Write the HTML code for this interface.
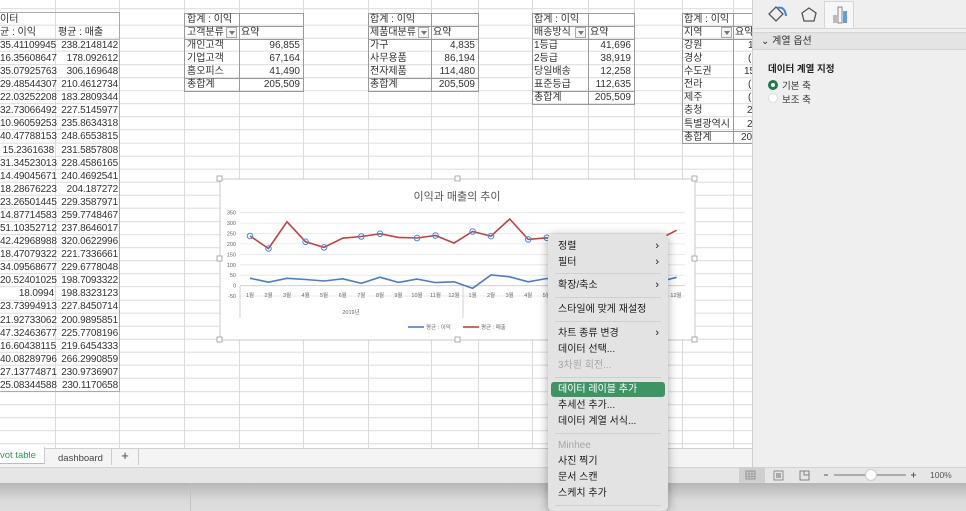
<!DOCTYPE html>
<html><head><meta charset="utf-8"><style>
*{margin:0;padding:0;box-sizing:border-box}
body{width:966px;height:511px;overflow:hidden;background:#fff;font-family:"Liberation Sans","Noto Sans CJK KR",sans-serif;font-size:10px;color:#333;position:relative}
.sheet{position:absolute;left:0;top:0;width:752px;height:448px;background:#fff;
background-image:repeating-linear-gradient(to bottom,transparent 0,transparent 12.08px,#dcdcdc 12.08px,#dcdcdc 13.08px);background-position:0 12.7px;background-repeat:repeat}
.v{position:absolute;top:0;width:1px;height:448px;background:#dcdcdc}
.c{position:absolute;height:13px;line-height:13px;white-space:nowrap}
.r{text-align:right}
.box{position:absolute;border:1px solid #9a9a9a}
.hl{position:absolute;height:1px;background:#9a9a9a}
.vl{position:absolute;width:1px;background:#9a9a9a}
.dd{position:absolute;width:11px;height:11px;border:1px solid #aaa;background:#f4f4f4}
.dd:after{content:"";position:absolute;left:2px;top:3px;border-left:3px solid transparent;border-right:3px solid transparent;border-top:4px solid #777}
.menu{position:absolute;left:548px;top:234px;width:120px;height:277px;background:#e3e3e3;border-radius:5px;box-shadow:0 2px 10px rgba(0,0,0,.35);font-size:10px;color:#1a1a1a}
.mi{position:absolute;left:10px;height:15px;line-height:15px}
.sep{position:absolute;left:7px;width:106px;height:1px;background:#cfcfcf}
.ar{position:absolute;right:9px;font-size:11px}
.num{font-size:10px;letter-spacing:-0.15px}
</style></head><body>
<div class="sheet">
<div class="v" style="left:55px"></div><div class="v" style="left:119px"></div><div class="v" style="left:184px"></div><div class="v" style="left:239px"></div><div class="v" style="left:303px"></div><div class="v" style="left:368px"></div><div class="v" style="left:431px"></div><div class="v" style="left:478px"></div><div class="v" style="left:532px"></div><div class="v" style="left:588px"></div><div class="v" style="left:634px"></div><div class="v" style="left:682px"></div><div class="v" style="left:733px"></div>
</div>
<!-- left table -->
<div class="box" style="left:-2px;top:12px;width:122px;height:380px;border-color:#aaa"></div>
<div class="c" style="left:0;top:12.7px">이터</div>
<div class="c" style="left:0;top:25.8px">균 : 이익</div><div class="c" style="left:58px;top:25.8px">평균 : 매출</div>
<div class="hl" style="left:0;top:38.5px;width:120px;background:#bbb"></div>
<div class="num" style="position:absolute;left:0;top:38.9px;width:118px;line-height:13.08px">
<div style="display:flex"><div style="width:54px;text-align:right">35.41109945</div><div style="width:64px;text-align:right">238.2148142</div></div>
<div style="display:flex"><div style="width:54px;text-align:right">16.35608647</div><div style="width:64px;text-align:right">178.092612</div></div>
<div style="display:flex"><div style="width:54px;text-align:right">35.07925763</div><div style="width:64px;text-align:right">306.169648</div></div>
<div style="display:flex"><div style="width:54px;text-align:right">29.48544307</div><div style="width:64px;text-align:right">210.4612734</div></div>
<div style="display:flex"><div style="width:54px;text-align:right">22.03252208</div><div style="width:64px;text-align:right">183.2809344</div></div>
<div style="display:flex"><div style="width:54px;text-align:right">32.73066492</div><div style="width:64px;text-align:right">227.5145977</div></div>
<div style="display:flex"><div style="width:54px;text-align:right">10.96059253</div><div style="width:64px;text-align:right">235.8634318</div></div>
<div style="display:flex"><div style="width:54px;text-align:right">40.47788153</div><div style="width:64px;text-align:right">248.6553815</div></div>
<div style="display:flex"><div style="width:54px;text-align:right">15.2361638</div><div style="width:64px;text-align:right">231.5857808</div></div>
<div style="display:flex"><div style="width:54px;text-align:right">31.34523013</div><div style="width:64px;text-align:right">228.4586165</div></div>
<div style="display:flex"><div style="width:54px;text-align:right">14.49045671</div><div style="width:64px;text-align:right">240.4692541</div></div>
<div style="display:flex"><div style="width:54px;text-align:right">18.28676223</div><div style="width:64px;text-align:right">204.187272</div></div>
<div style="display:flex"><div style="width:54px;text-align:right">23.26501445</div><div style="width:64px;text-align:right">229.3587971</div></div>
<div style="display:flex"><div style="width:54px;text-align:right">14.87714583</div><div style="width:64px;text-align:right">259.7748467</div></div>
<div style="display:flex"><div style="width:54px;text-align:right">51.10352712</div><div style="width:64px;text-align:right">237.8646017</div></div>
<div style="display:flex"><div style="width:54px;text-align:right">42.42968988</div><div style="width:64px;text-align:right">320.0622996</div></div>
<div style="display:flex"><div style="width:54px;text-align:right">18.47079322</div><div style="width:64px;text-align:right">221.7336661</div></div>
<div style="display:flex"><div style="width:54px;text-align:right">34.09568677</div><div style="width:64px;text-align:right">229.6778048</div></div>
<div style="display:flex"><div style="width:54px;text-align:right">20.52401025</div><div style="width:64px;text-align:right">198.7093322</div></div>
<div style="display:flex"><div style="width:54px;text-align:right">18.0994</div><div style="width:64px;text-align:right">198.8323123</div></div>
<div style="display:flex"><div style="width:54px;text-align:right">23.73994913</div><div style="width:64px;text-align:right">227.8450714</div></div>
<div style="display:flex"><div style="width:54px;text-align:right">21.92733062</div><div style="width:64px;text-align:right">200.9895851</div></div>
<div style="display:flex"><div style="width:54px;text-align:right">47.32463677</div><div style="width:64px;text-align:right">225.7708196</div></div>
<div style="display:flex"><div style="width:54px;text-align:right">16.60438115</div><div style="width:64px;text-align:right">219.6454333</div></div>
<div style="display:flex"><div style="width:54px;text-align:right">40.08289796</div><div style="width:64px;text-align:right">266.2990859</div></div>
<div style="display:flex"><div style="width:54px;text-align:right">27.13774871</div><div style="width:64px;text-align:right">230.9736907</div></div>
<div style="display:flex"><div style="width:54px;text-align:right">25.08344588</div><div style="width:64px;text-align:right">230.1170658</div></div>
</div>

<!-- pivot A -->
<div class="box" style="left:184px;top:12.7px;width:120px;height:79.5px"></div>
<div class="vl" style="left:239px;top:12.7px;height:79px"></div>
<div class="hl" style="left:184px;top:25.8px;width:120px"></div><div class="hl" style="left:184px;top:38.9px;width:120px"></div><div class="hl" style="left:184px;top:78.2px;width:120px"></div>
<div class="c" style="left:187px;top:12.7px">합계 : 이익</div>
<div class="c" style="left:187px;top:25.8px">고객분류</div><div class="dd" style="left:226px;top:26.8px"></div><div class="c" style="left:241px;top:25.8px">요약</div>
<div class="c" style="left:187px;top:38.9px">개인고객</div><div class="c r" style="left:240px;width:60px;top:38.9px">96,855</div>
<div class="c" style="left:187px;top:52px">기업고객</div><div class="c r" style="left:240px;width:60px;top:52px">67,164</div>
<div class="c" style="left:187px;top:65.1px">홈오피스</div><div class="c r" style="left:240px;width:60px;top:65.1px">41,490</div>
<div class="c" style="left:187px;top:78.2px">총합계</div><div class="c r" style="left:240px;width:60px;top:78.2px">205,509</div>
<!-- pivot B -->
<div class="box" style="left:368px;top:12.7px;width:111px;height:79.5px"></div>
<div class="vl" style="left:431px;top:12.7px;height:79px"></div>
<div class="hl" style="left:368px;top:25.8px;width:111px"></div><div class="hl" style="left:368px;top:38.9px;width:111px"></div><div class="hl" style="left:368px;top:78.2px;width:111px"></div>
<div class="c" style="left:370px;top:12.7px">합계 : 이익</div>
<div class="c" style="left:370px;top:25.8px">제품대분류</div><div class="dd" style="left:418px;top:26.8px"></div><div class="c" style="left:433px;top:25.8px">요약</div>
<div class="c" style="left:370px;top:38.9px">가구</div><div class="c r" style="left:432px;width:43px;top:38.9px">4,835</div>
<div class="c" style="left:370px;top:52px">사무용품</div><div class="c r" style="left:432px;width:43px;top:52px">86,194</div>
<div class="c" style="left:370px;top:65.1px">전자제품</div><div class="c r" style="left:432px;width:43px;top:65.1px">114,480</div>
<div class="c" style="left:370px;top:78.2px">총합계</div><div class="c r" style="left:432px;width:43px;top:78.2px">205,509</div>
<!-- pivot C -->
<div class="box" style="left:532px;top:12.7px;width:103px;height:92.6px"></div>
<div class="vl" style="left:588px;top:12.7px;height:92px"></div>
<div class="hl" style="left:532px;top:25.8px;width:103px"></div><div class="hl" style="left:532px;top:38.9px;width:103px"></div><div class="hl" style="left:532px;top:91.3px;width:103px"></div>
<div class="c" style="left:534px;top:12.7px">합계 : 이익</div>
<div class="c" style="left:534px;top:25.8px">배송방식</div><div class="dd" style="left:575px;top:26.8px"></div><div class="c" style="left:590px;top:25.8px">요약</div>
<div class="c" style="left:534px;top:38.9px">1등급</div><div class="c r" style="left:589px;width:42px;top:38.9px">41,696</div>
<div class="c" style="left:534px;top:52px">2등급</div><div class="c r" style="left:589px;width:42px;top:52px">38,919</div>
<div class="c" style="left:534px;top:65.1px">당일배송</div><div class="c r" style="left:589px;width:42px;top:65.1px">12,258</div>
<div class="c" style="left:534px;top:78.2px">표준등급</div><div class="c r" style="left:589px;width:42px;top:78.2px">112,635</div>
<div class="c" style="left:534px;top:91.3px">총합계</div><div class="c r" style="left:589px;width:42px;top:91.3px">205,509</div>
<!-- pivot D -->
<div class="box" style="left:682px;top:12.7px;width:80px;height:131px"></div>
<div class="vl" style="left:733px;top:12.7px;height:131px"></div>
<div class="hl" style="left:682px;top:25.8px;width:80px"></div><div class="hl" style="left:682px;top:38.9px;width:80px"></div><div class="hl" style="left:682px;top:130.5px;width:80px"></div>
<div class="c" style="left:684px;top:12.7px">합계 : 이익</div>
<div class="c" style="left:684px;top:25.8px">지역</div><div class="dd" style="left:721px;top:26.8px"></div><div class="c" style="left:735px;top:25.8px">요약</div>
<div class="c" style="left:684px;top:38.9px">강원</div><div class="c" style="left:684px;top:52px">경상</div><div class="c" style="left:684px;top:65.1px">수도권</div><div class="c" style="left:684px;top:78.2px">전라</div><div class="c" style="left:684px;top:91.3px">제주</div><div class="c" style="left:684px;top:104.4px">충청</div><div class="c" style="left:684px;top:117.5px">특별광역시</div><div class="c" style="left:684px;top:130.6px">총합계</div>
<div class="c" style="left:748px;top:38.9px">1</div><div class="c" style="left:748px;top:52px">(</div><div class="c" style="left:744px;top:65.1px">15</div><div class="c" style="left:748px;top:78.2px">(</div><div class="c" style="left:748px;top:91.3px">(</div><div class="c" style="left:747px;top:104.4px">2</div><div class="c" style="left:747px;top:117.5px">2</div><div class="c" style="left:741px;top:130.6px">20</div>

<!-- chart -->
<svg style="position:absolute;left:0;top:0" width="966" height="511">
<rect x="220" y="179" width="475" height="161" fill="#fff" stroke="#c8c8c8"/>
<g fill="#fff" stroke="#999" stroke-width="0.8">
<rect x="217" y="176" width="5" height="5"/><rect x="455" y="176" width="5" height="5"/><rect x="692" y="176" width="5" height="5"/>
<rect x="217" y="256" width="5" height="5"/><rect x="692" y="256" width="5" height="5"/>
<rect x="217" y="337" width="5" height="5"/><rect x="455" y="337" width="5" height="5"/><rect x="692" y="337" width="5" height="5"/>
</g>
<text x="457" y="200" text-anchor="middle" font-size="11" fill="#555" font-family="Liberation Sans,Noto Sans CJK KR,sans-serif">이익과 매출의 추이</text>
<g stroke="#e4e4e4" stroke-width="0.8">
<line x1="240" x2="685" y1="212.7" y2="212.7"/><line x1="240" x2="685" y1="223.1" y2="223.1"/><line x1="240" x2="685" y1="233.5" y2="233.5"/><line x1="240" x2="685" y1="243.9" y2="243.9"/><line x1="240" x2="685" y1="254.4" y2="254.4"/><line x1="240" x2="685" y1="264.8" y2="264.8"/><line x1="240" x2="685" y1="275.2" y2="275.2"/><line x1="240" x2="685" y1="296" y2="296"/>
</g>
<line x1="240" x2="685" y1="285.6" y2="285.6" stroke="#d0d0d0"/>
<line x1="463" x2="463" y1="286" y2="318" stroke="#d0d0d0"/>
<line x1="240" x2="240" y1="286" y2="318" stroke="#d0d0d0"/>
<g font-size="5.5" fill="#666" text-anchor="end" font-family="Liberation Sans,sans-serif">
<text x="236" y="214.7">350</text><text x="236" y="225.1">300</text><text x="236" y="235.5">250</text><text x="236" y="245.9">200</text><text x="236" y="256.4">150</text><text x="236" y="266.8">100</text><text x="236" y="277.2">50</text><text x="236" y="287.6">0</text><text x="236" y="298">-50</text>
</g>
<g font-size="5.5" fill="#666" text-anchor="middle" font-family="Liberation Sans,Noto Sans CJK KR,sans-serif">
<text x="250" y="297">1월</text><text x="268.5" y="297">2월</text><text x="287" y="297">3월</text><text x="305.6" y="297">4월</text><text x="324" y="297">5월</text><text x="342.7" y="297">6월</text><text x="361.3" y="297">7월</text><text x="380" y="297">8월</text><text x="398.4" y="297">9월</text><text x="417" y="297">10월</text><text x="435.5" y="297">11월</text><text x="454" y="297">12월</text>
<text x="472.6" y="297">1월</text><text x="491" y="297">2월</text><text x="509.7" y="297">3월</text><text x="528.2" y="297">4월</text><text x="546.8" y="297">5월</text><text x="676" y="297">12월</text>
<text x="351" y="314">2019년</text>
</g>
<polyline fill="none" stroke="#4a7ec6" stroke-width="1.6" points="250,278.2 268.5,282.2 287,278.3 305.6,279.5 324,281 342.7,278.8 361.3,283.3 380,277.2 398.4,282.4 417,279.1 435.5,282.6 454,281.8 472.6,288.3 491,275 509.7,276.8 528.2,281.8 546.8,278.5 565.3,281.3 583.9,281.8 602.4,280.7 621,281.0 639.5,275.7 658,282.1 676.6,277.3"/>
<polyline fill="none" stroke="#c44044" stroke-width="1.6" points="250,236 268.5,248.5 287,221.8 305.6,241.8 324,247.4 342.7,238.2 361.3,236.5 380,233.8 398.4,237.4 417,238 435.5,235.5 454,243.1 472.6,231.5 491,236.1 509.7,219 528.2,239.4 546.8,237.8 565.3,244.2 583.9,244.2 602.4,238.1 621,243.7 639.5,238.6 658,239.9 676.6,230.2"/>
<g fill="none" stroke="#3d8fe0" stroke-width="1">
<circle cx="250" cy="236" r="2.8"/><circle cx="268.5" cy="248.5" r="2.8"/><circle cx="305.6" cy="241.8" r="2.8"/><circle cx="324" cy="247.4" r="2.8"/><circle cx="361.3" cy="236.5" r="2.8"/><circle cx="380" cy="233.8" r="2.8"/><circle cx="417" cy="238" r="2.8"/><circle cx="435.5" cy="235.5" r="2.8"/><circle cx="472.6" cy="231.5" r="2.8"/><circle cx="491" cy="236.1" r="2.8"/><circle cx="528.2" cy="239.4" r="2.8"/><circle cx="546.8" cy="237.8" r="2.8"/>
</g>
<line x1="408" x2="424" y1="327" y2="327" stroke="#4a7ec6" stroke-width="1.6"/>
<line x1="463" x2="479" y1="327" y2="327" stroke="#c44044" stroke-width="1.6"/>
<g font-size="5.5" fill="#666" font-family="Liberation Sans,Noto Sans CJK KR,sans-serif"><text x="426" y="329">평균 : 이익</text><text x="481" y="329">평균 : 매출</text></g>
</svg>

<!-- right panel -->
<div style="position:absolute;left:752px;top:0;width:214px;height:467px;background:#efefef;border-left:1px solid #d0d0d0">
<div style="position:absolute;left:71px;top:1px;width:30px;height:27px;background:#f7f7f7;border:1px solid #d6d6d6;border-bottom:none"></div>
<div style="position:absolute;left:0;top:28px;width:214px;height:1px;background:#d6d6d6"></div>
<svg style="position:absolute;left:0;top:0" width="110" height="28">
<path d="M16 14 L23 7 L30 14 L23 21 Z" fill="none" stroke="#555" stroke-width="1.3"/><path d="M24 8 Q32 6 33 16" fill="none" stroke="#3b86d8" stroke-width="2"/>
<path d="M56 8 L63 13 L61 21 L51 21 L49 13 Z" fill="none" stroke="#555" stroke-width="1.3"/>
<rect x="80" y="15" width="4" height="8" fill="#bbb"/><rect x="85" y="7" width="4" height="16" fill="none" stroke="#888"/><rect x="90" y="11" width="4" height="12" fill="#5ba0e8"/>
</svg>
<div style="position:absolute;left:0;top:32px;width:214px;height:18px;background:#e4e4e4;border-top:1px solid #d4d4d4;border-bottom:1px solid #d4d4d4;font-size:10px;line-height:17px;padding-left:8px;color:#333">⌄ 계열 옵션</div>
<div style="position:absolute;left:15px;top:61px;font-size:9.5px;font-weight:bold;color:#222">데이터 계열 지정</div>
<div style="position:absolute;left:15px;top:80px;width:10px;height:10px;border-radius:50%;border:3px solid #1e7a4d;background:#fff"></div>
<div style="position:absolute;left:29px;top:78px;font-size:9.5px">기본 축</div>
<div style="position:absolute;left:15px;top:93px;width:10px;height:10px;border-radius:50%;background:#fff;border:1px solid #ddd"></div>
<div style="position:absolute;left:29px;top:92px;font-size:9.5px">보조 축</div>
</div>

<!-- tab bar -->
<div style="position:absolute;left:0;top:448px;width:752px;height:19px;background:#f4f4f4;border-top:1px solid #d0d0d0"></div>
<div style="position:absolute;left:0;top:447px;width:45px;height:17px;background:#fff;border-bottom:1px solid #bbb;border-right:1px solid #ccc;color:#2f9a55;font-size:9.5px;line-height:17px;padding-left:0">vot table</div>
<div style="position:absolute;left:58px;top:453px;font-size:9.5px;color:#444">dashboard</div>
<div style="position:absolute;left:111px;top:449px;width:28px;height:16px;border-left:1px solid #ccc;border-right:1px solid #ccc;text-align:center;font-size:13px;line-height:14px;color:#444">+</div>
<!-- status bar -->
<div style="position:absolute;left:0;top:467px;width:966px;height:16px;background:#e6e6e6;border-top:1px solid #d3d3d3"></div>
<div style="position:absolute;left:739px;top:467px;width:26px;height:16px;background:#cfcfcf"></div>
<svg style="position:absolute;left:730px;top:467px" width="236" height="16">
<rect x="16" y="4" width="9" height="8" fill="none" stroke="#888" stroke-width="0.8"/><line x1="16" x2="25" y1="7" y2="7" stroke="#888" stroke-width="0.6"/><line x1="16" x2="25" y1="9.5" y2="9.5" stroke="#888" stroke-width="0.6"/><line x1="19" x2="19" y1="4" y2="12" stroke="#888" stroke-width="0.6"/><line x1="22" x2="22" y1="4" y2="12" stroke="#888" stroke-width="0.6"/>
<rect x="44" y="4" width="9" height="9" fill="none" stroke="#777" stroke-width="0.8"/><rect x="46" y="6" width="5" height="5" fill="#aaa"/>
<path d="M70 4 H79 V13 H70 Z M74 4 V8 H79" fill="none" stroke="#666" stroke-width="0.8"/>
<line x1="94" x2="98" y1="8" y2="8" stroke="#555"/><line x1="104" x2="176" y1="8" y2="8" stroke="#999" stroke-width="1.5"/>
<circle cx="141" cy="8" r="5.5" fill="#fff" stroke="#ccc"/>
<path d="M181 8 h5 M183.5 5.5 v5" stroke="#555"/>
<text x="200" y="11" font-size="8.5" fill="#555" font-family="Liberation Sans,sans-serif">100%</text>
</svg>
<!-- bottom area -->
<div style="position:absolute;left:0;top:483px;width:966px;height:28px;background:linear-gradient(#b6b6b6,#d9d9d9 60%,#dedede)"></div>
<div style="position:absolute;left:190px;top:483px;width:1px;height:28px;background:#c2c2c2"></div>

<!-- context menu -->
<div class="menu">
<div class="mi" style="top:5px">정렬</div><div class="ar" style="top:6px">›</div>
<div class="mi" style="top:21px">필터</div><div class="ar" style="top:22px">›</div>
<div class="sep" style="top:39px"></div>
<div class="mi" style="top:44px">확장/축소</div><div class="ar" style="top:45px">›</div>
<div class="sep" style="top:63px"></div>
<div class="mi" style="top:68px">스타일에 맞게 재설정</div>
<div class="sep" style="top:87px"></div>
<div class="mi" style="top:92px">차트 종류 변경</div><div class="ar" style="top:93px">›</div>
<div class="mi" style="top:108px">데이터 선택...</div>
<div class="mi" style="top:124px;color:#a6a6a6">3차원 회전...</div>
<div class="sep" style="top:143px"></div>
<div style="position:absolute;left:3px;top:148px;width:114px;height:15px;background:#3f9464;border-radius:3px"></div>
<div class="mi" style="top:148px;color:#fff">데이터 레이블 추가</div>
<div class="mi" style="top:164px">추세선 추가...</div>
<div class="mi" style="top:180px">데이터 계열 서식...</div>
<div class="sep" style="top:199px"></div>
<div class="mi" style="top:204px;color:#a6a6a6">Minhee</div>
<div class="mi" style="top:220px">사진 찍기</div>
<div class="mi" style="top:236px">문서 스캔</div>
<div class="mi" style="top:252px">스케치 추가</div>
<div class="sep" style="top:271px"></div>
</div>
</body></html>
